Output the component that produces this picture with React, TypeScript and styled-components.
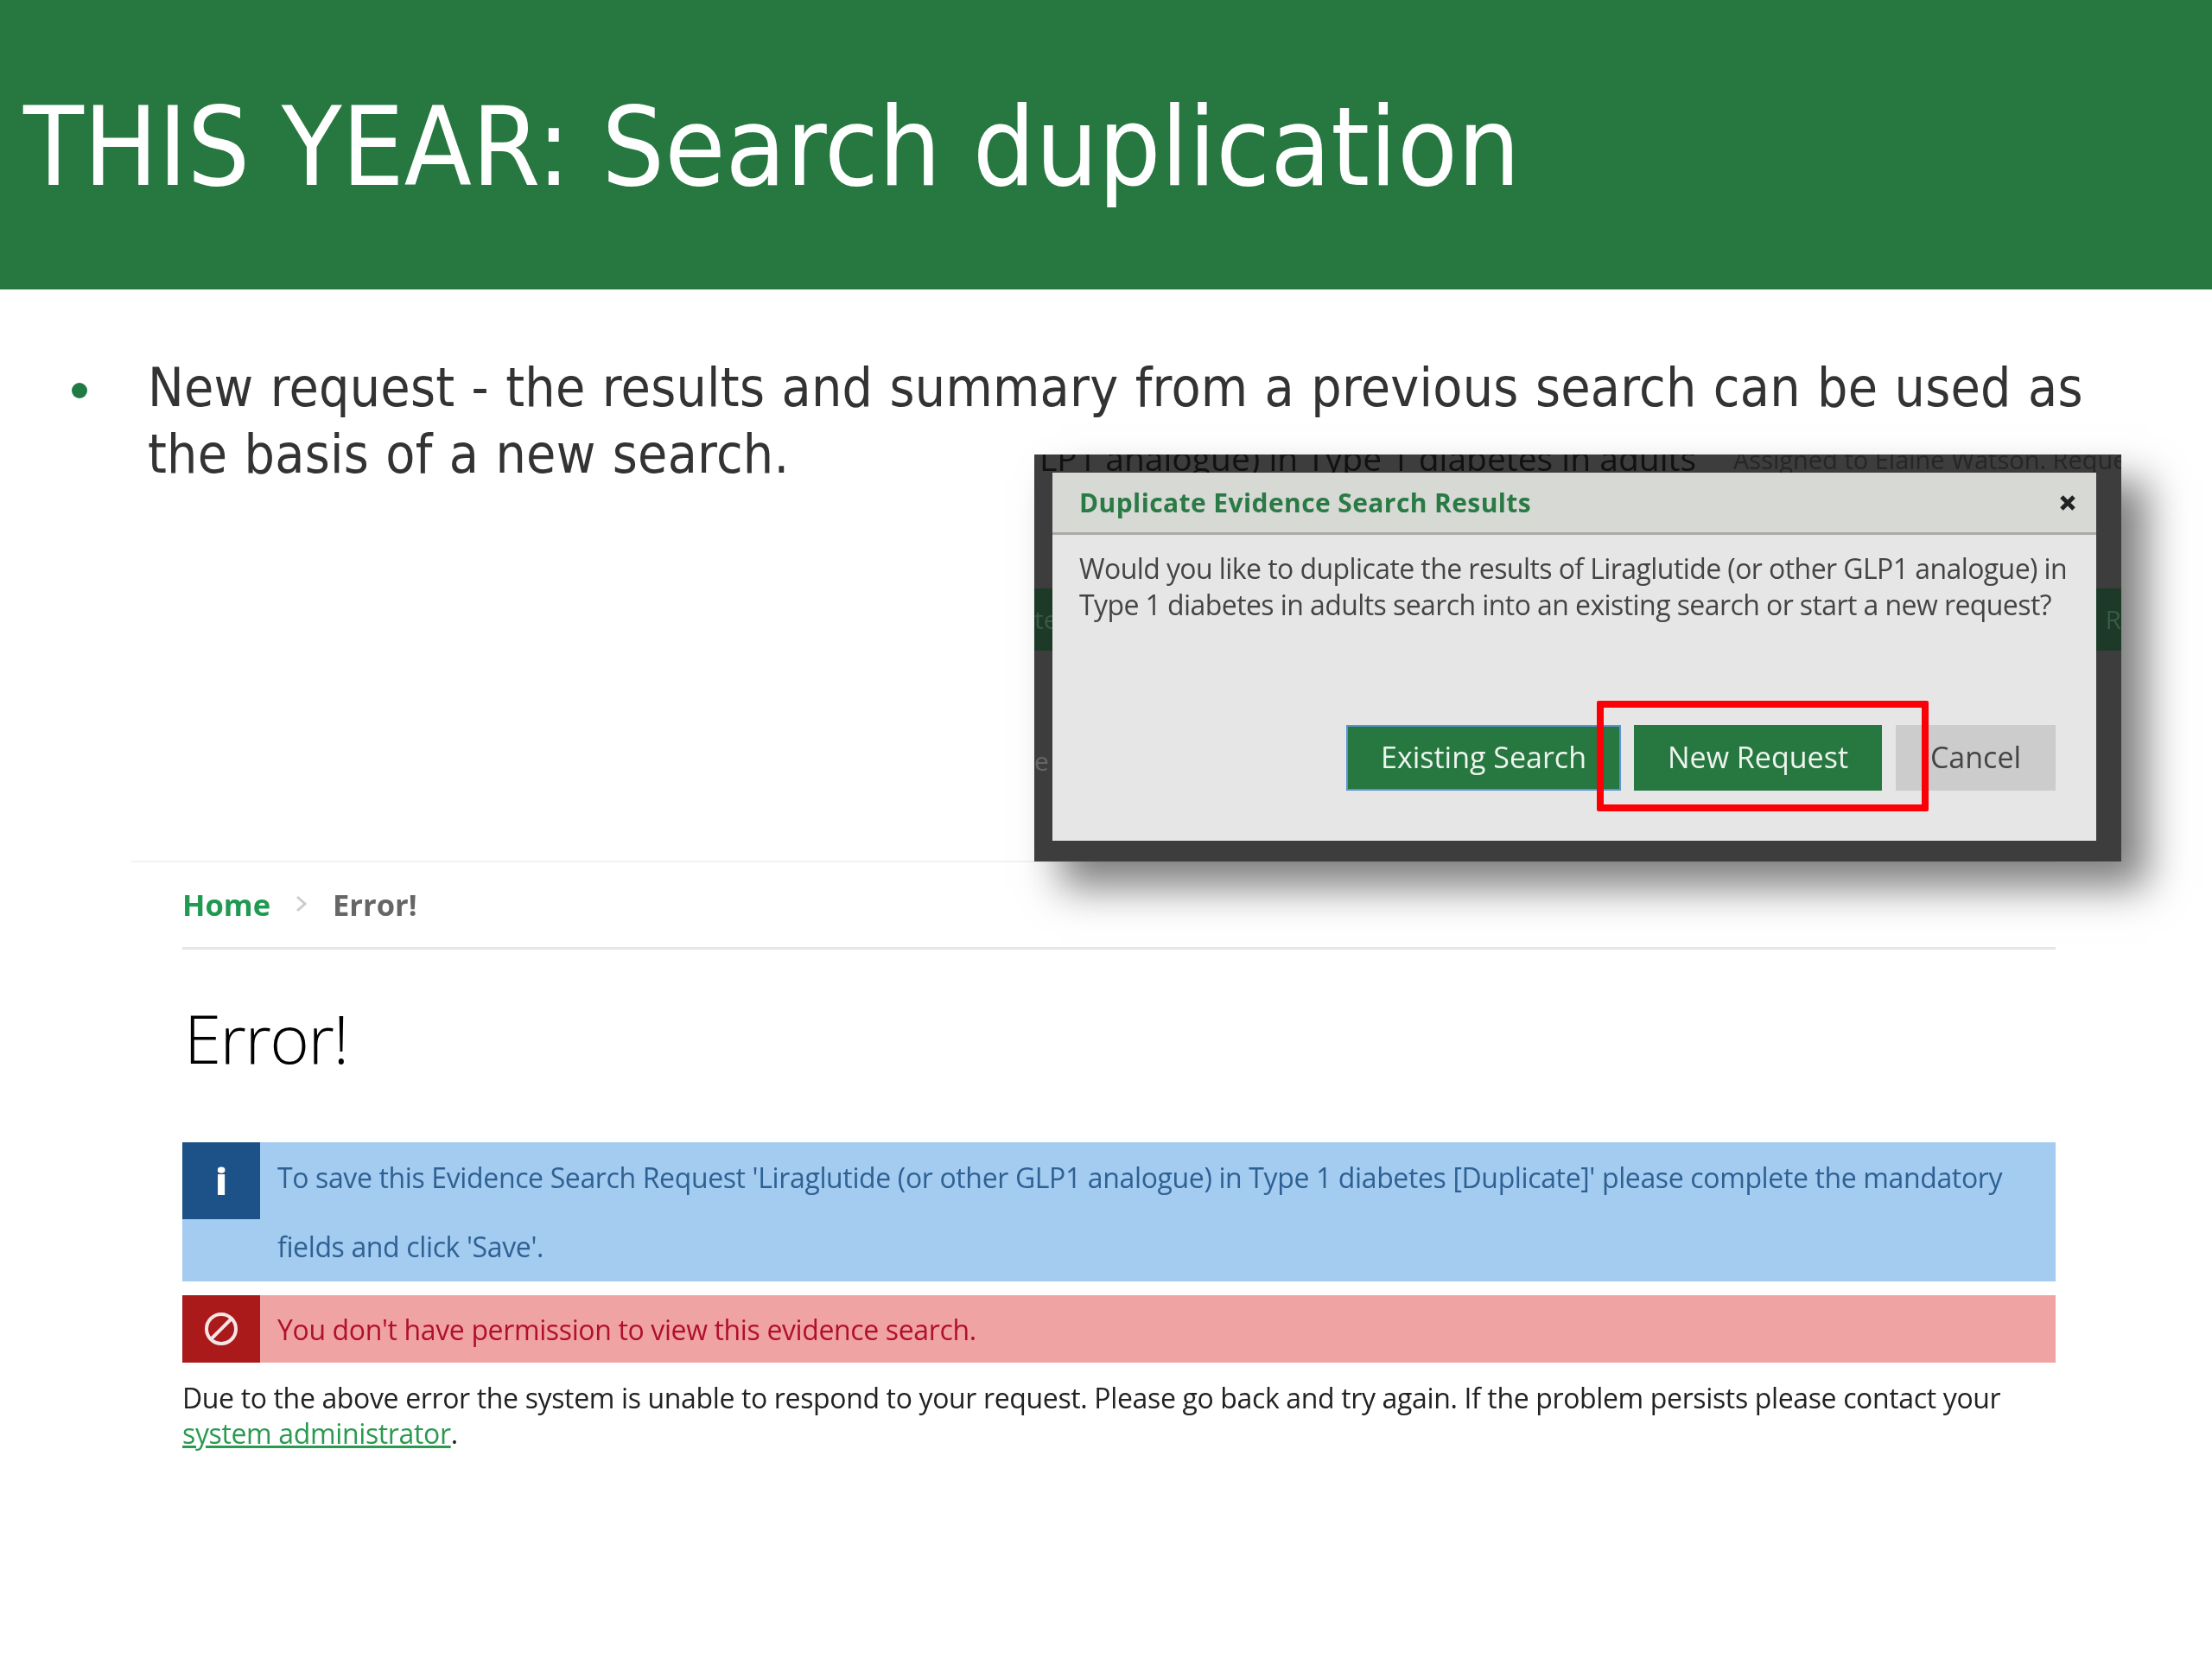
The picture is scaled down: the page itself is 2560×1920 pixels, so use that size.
import React from "react";
import styled, { createGlobalStyle } from "styled-components";

const Global = createGlobalStyle`
  html, body { margin: 0; padding: 0; background: #fff; }
  * { box-sizing: border-box; }
`;

const Slide = styled.main`
  position: relative;
  width: 2560px;
  height: 1920px;
  background: #fff;
  overflow: hidden;
  filter: blur(0.6px);
  font-family: "Open Sans", "Liberation Sans", sans-serif;
`;

const Banner = styled.header`
  height: 335px;
  background: #267740;
  display: flex;
  align-items: center;
  padding: 6px 0 0 27px;
`;

const Title = styled.h1`
  margin: 0;
  font-family: "DejaVu Sans", sans-serif;
  font-stretch: condensed;
  font-weight: 400;
  font-size: 127px;
  letter-spacing: 0.09px;
  line-height: 1;
  color: #fff;
  white-space: nowrap;
`;

const BulletRow = styled.section`
  display: flex;
  padding: 75px 80px 0 83px;
  height: 661px;
`;

const Dot = styled.span`
  flex: none;
  width: 18px;
  height: 18px;
  margin-top: 33px;
  border-radius: 50%;
  background: #1f7a45;
  margin-right: 70px;
`;

const BulletText = styled.p`
  margin: 0;
  font-family: "DejaVu Sans", sans-serif;
  font-stretch: condensed;
  font-size: 62px;
  letter-spacing: 0.25px;
  word-spacing: 1.3px;
  line-height: 77px;
  color: #333;
`;

const Page = styled.section`
  display: flex;
  flex-direction: column;
  padding: 0 181px 0 211px;
`;

const TopRule = styled.div`
  height: 2px;
  margin: 0 0 0 -59px;
  background: #f2f2f2;
`;

const Crumbs = styled.nav`
  display: flex;
  align-items: center;
  height: 101px;
  gap: 28px;
  padding-bottom: 2px;
  border-bottom: 3px solid #e6e6e6;
  font-weight: 700;
  font-size: 34.5px;
`;

const Home = styled.a`
  color: #1f9a50;
`;

const Current = styled.span`
  color: #666;
`;

const Heading = styled.h2`
  margin: 52px 0 0 2px;
  font-weight: 300;
  font-size: 78px;
  letter-spacing: -1.5px;
  line-height: 100px;
  color: #000;
`;

const Alert = styled.div<{ $bg: string; $fg: string }>`
  display: flex;
  align-items: flex-start;
  background: ${(p) => p.$bg};
  color: ${(p) => p.$fg};
  font-size: 32px;
  letter-spacing: -0.37px;
`;

const AlertIcon = styled.div<{ $bg: string; $h: number }>`
  flex: none;
  width: 90px;
  height: ${(p) => p.$h}px;
  background: ${(p) => p.$bg};
  color: #fff;
  display: flex;
  align-items: center;
  justify-content: center;
  font-weight: 800;
  font-size: 42px;
`;

const InfoText = styled.div`
  padding: 1px 0 0 20px;
  line-height: 80px;
`;

const DangerText = styled.div`
  padding: 1px 0 0 20px;
  line-height: 78px;
`;

const InfoAlert = styled(Alert)`
  margin-top: 71px;
  height: 161px;
`;

const DangerAlert = styled(Alert)`
  margin-top: 16px;
  height: 78px;
`;

const Explain = styled.p`
  margin: 20px 0 0;
  font-size: 32px;
  letter-spacing: -0.36px;
  line-height: 41px;
  color: #222;
`;

const Link = styled.a`
  color: #2a9a50;
  text-decoration: underline;
`;

const Overlay = styled.aside`
  position: absolute;
  left: 1197px;
  top: 526px;
  width: 1258px;
  height: 471px;
  padding: 21px 29px 24px 21px;
  background: #3d3d3d;
  box-shadow: 30px 30px 44px rgba(0, 0, 0, 0.5);
`;

const BackdropClip = styled.div`
  position: absolute;
  inset: 0;
  overflow: hidden;
`;

const BehindTitle = styled.span`
  position: absolute;
  left: 6px;
  top: -21px;
  font-size: 39px;
  line-height: 50px;
  color: #111;
  white-space: nowrap;
`;

const BehindMeta = styled.span`
  position: absolute;
  left: 809px;
  top: -14px;
  font-size: 29px;
  line-height: 40px;
  color: #262626;
  white-space: nowrap;
`;

const BehindBand = styled.div<{ $side: "left" | "right" }>`
  position: absolute;
  top: 155px;
  height: 72px;
  width: 32px;
  background: #1c3a27;
  color: #3a5a45;
  font-size: 30px;
  line-height: 72px;
  ${(p) => (p.$side === "left" ? "left: 0; text-align: left;" : "right: 0; text-align: right;")}
`;

const BehindLetter = styled.span`
  position: absolute;
  left: 0;
  top: 335px;
  font-size: 30px;
  line-height: 40px;
  color: #666;
`;

const Dialog = styled.div`
  position: relative;
  height: 100%;
  background: #e6e6e6;
  display: flex;
  flex-direction: column;
`;

const DialogHead = styled.div`
  flex: none;
  height: 72px;
  background: #d6d9d4;
  border-bottom: 3px solid #aaa;
  padding: 0 23px 0 31px;
  display: flex;
  align-items: center;
  justify-content: space-between;
`;

const DialogTitle = styled.h3`
  margin: 0;
  font-size: 30px;
  letter-spacing: 0.4px;
  font-weight: 700;
  color: #2a7a45;
`;

const Close = styled.span`
  display: flex;
  color: #222;
`;

const DialogBody = styled.p`
  margin: 18px 0 0;
  padding: 0 10px 0 31px;
  font-size: 32px;
  letter-spacing: -0.58px;
  line-height: 42px;
  color: #444;
`;

const DialogFoot = styled.div`
  margin-top: auto;
  padding: 0 47px 58px 0;
  display: flex;
  justify-content: flex-end;
`;

const Btn = styled.button<{ $kind: "primary" | "focus" | "plain"; $w: number; $ml: number }>`
  width: ${(p) => p.$w}px;
  height: 76px;
  margin-left: ${(p) => p.$ml}px;
  border: ${(p) => (p.$kind === "focus" ? "2px solid #5b93d6" : "0")};
  background: ${(p) => (p.$kind === "plain" ? "#cccccc" : "#267740")};
  color: ${(p) => (p.$kind === "plain" ? "#444" : "#eef5ee")};
  font-family: inherit;
  font-size: 34px;
  padding: 0 0 2px;
`;

const RedBox = styled.div`
  position: absolute;
  left: 630px;
  top: 264px;
  width: 384px;
  height: 128px;
  border: 8px solid #fb0007;
  border-radius: 2px;
`;

export default function App() {
  return (
    <Slide>
      <Global />
      <Banner>
        <Title>THIS YEAR: Search duplication</Title>
      </Banner>
      <BulletRow>
        <Dot />
        <BulletText>
          New request - the results and summary from a previous search can be used as the basis of a new search.
        </BulletText>
      </BulletRow>
      <Page>
        <TopRule />
        <Crumbs>
          <Home>Home</Home>
          <svg width="16" height="24" viewBox="0 0 16 24" fill="none" stroke="#ccc" strokeWidth="3">
            <path d="M3 4l9 8-9 8" />
          </svg>
          <Current>Error!</Current>
        </Crumbs>
        <Heading>Error!</Heading>
        <InfoAlert $bg="#a4cbf0" $fg="#2e6193">
          <AlertIcon $bg="#1d5288" $h={89}>i</AlertIcon>
          <InfoText>
            To save this Evidence Search Request 'Liraglutide (or other GLP1 analogue) in Type 1 diabetes [Duplicate]' please complete the mandatory fields and click 'Save'.
          </InfoText>
        </InfoAlert>
        <DangerAlert $bg="#f0a3a3" $fg="#b0102a">
          <AlertIcon $bg="#ab1a1a" $h={78}>
            <svg width="42" height="42" viewBox="0 0 42 42" fill="none" stroke="#f5e6e6" strokeWidth="4">
              <circle cx="21" cy="21" r="17" />
              <path d="M9 33 33 9" />
            </svg>
          </AlertIcon>
          <DangerText>You don't have permission to view this evidence search.</DangerText>
        </DangerAlert>
        <Explain>
          Due to the above error the system is unable to respond to your request. Please go back and try again. If the problem persists please contact your <Link>system administrator</Link>.
        </Explain>
      </Page>
      <Overlay>
        <BackdropClip>
          <BehindTitle>LP1 analogue) in Type 1 diabetes in adults</BehindTitle>
          <BehindMeta>Assigned to Elaine Watson. Request</BehindMeta>
          <BehindBand $side="left">te</BehindBand>
          <BehindBand $side="right">R</BehindBand>
          <BehindLetter>e</BehindLetter>
        </BackdropClip>
        <Dialog>
          <DialogHead>
            <DialogTitle>Duplicate Evidence Search Results</DialogTitle>
            <Close>
              <svg width="20" height="20" viewBox="0 0 20 20" fill="none" stroke="#222" strokeWidth="5">
                <path d="M3 3l14 14M17 3 3 17" />
              </svg>
            </Close>
          </DialogHead>
          <DialogBody>
            Would you like to duplicate the results of Liraglutide (or other GLP1 analogue) in Type 1 diabetes in adults search into an existing search or start a new request?
          </DialogBody>
          <DialogFoot>
            <Btn $kind="focus" $w={318} $ml={0}>Existing Search</Btn>
            <Btn $kind="primary" $w={287} $ml={15}>New Request</Btn>
            <Btn $kind="plain" $w={185} $ml={16}>Cancel</Btn>
          </DialogFoot>
          <RedBox />
        </Dialog>
      </Overlay>
    </Slide>
  );
}
